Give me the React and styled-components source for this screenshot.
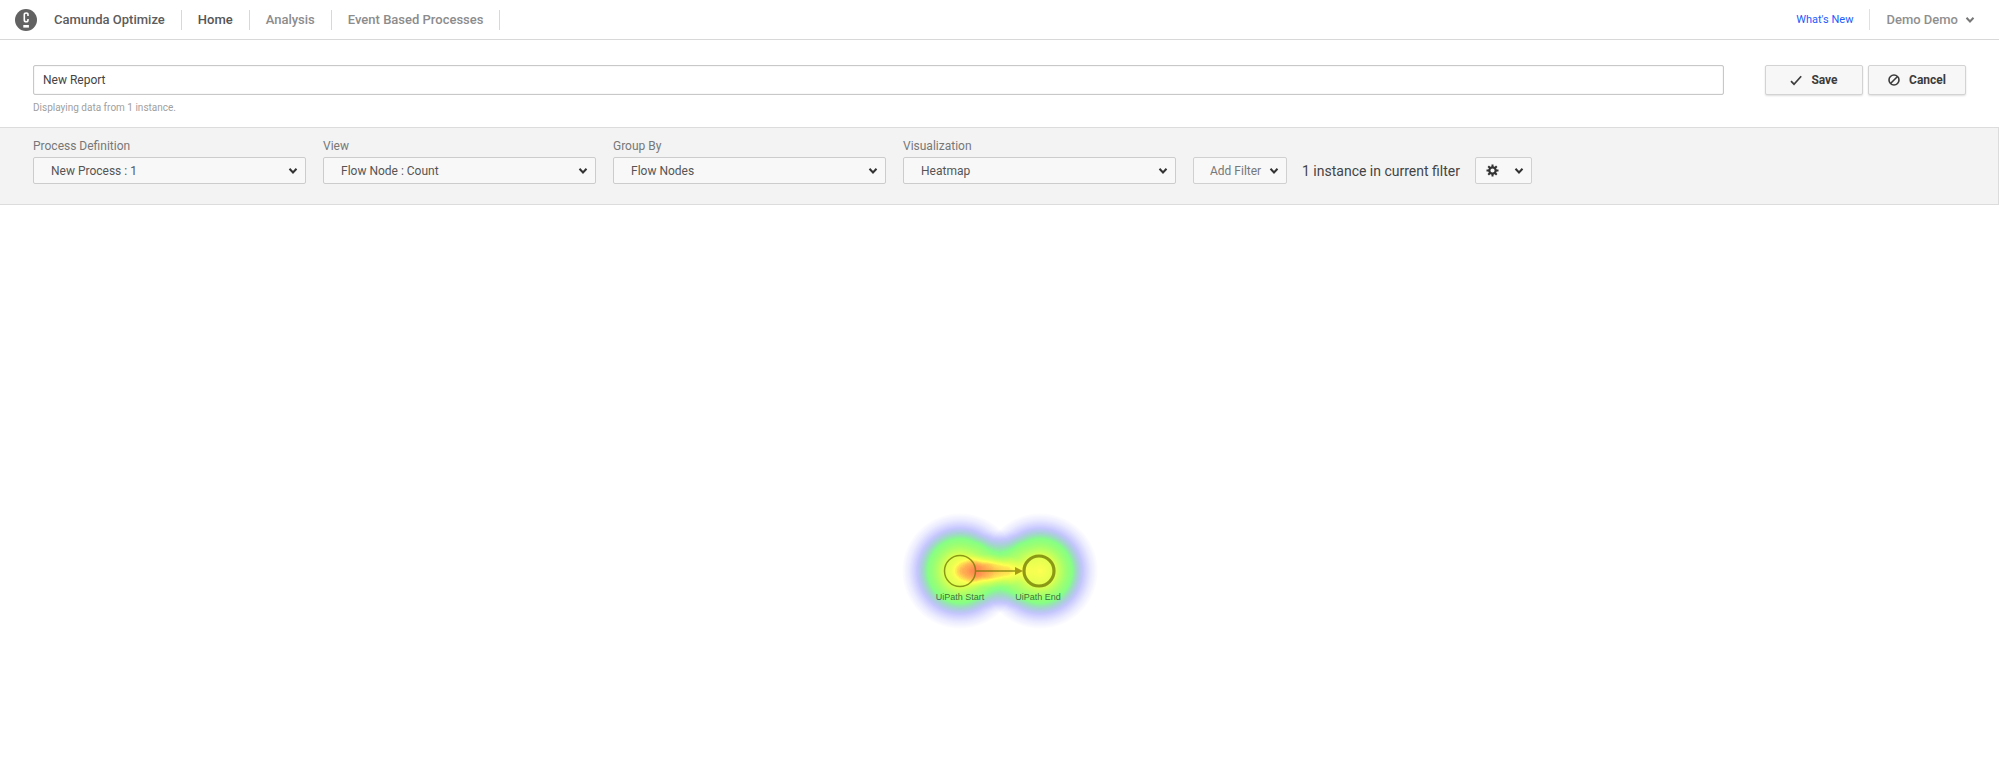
import React from 'react';
import styled, { createGlobalStyle } from 'styled-components';

const GlobalStyle = createGlobalStyle`
  *, *::before, *::after { box-sizing: border-box; }
  body { margin: 0; background: #fff; }
  body, button, input, select { font-family: Roboto, "Liberation Sans", sans-serif; }
`;

const Page = styled.div`
  display: flex;
  flex-direction: column;
  min-height: 100vh;
  color: #444;
`;

const Header = styled.header`
  display: flex;
  align-items: center;
  height: 40px;
  padding: 0 24px 0 15px;
  border-bottom: 1px solid #d8d8d8;
`;

const Brand = styled.a`
  display: flex;
  align-items: center;
  gap: 17px;
  padding-right: 16px;
  font-size: 13px;
  font-weight: 500;
  color: #5c5c5c;
  text-decoration: none;
`;

const Nav = styled.nav`
  display: flex;
  flex: 1;
  border-left: 1px solid #d8d8d8;
`;

const NavLink = styled.a`
  padding: 0 16px;
  border-right: 1px solid #d8d8d8;
  font-size: 13px;
  line-height: 20px;
  font-weight: 500;
  color: ${(p) => (p.$active ? '#555' : '#8c8c8c')};
  text-decoration: none;
`;

const NewsLink = styled.a`
  padding-right: 16px;
  font-size: 11px;
  line-height: 20px;
  color: #1a5cff;
  text-decoration: none;
`;

const UserButton = styled.button`
  display: flex;
  align-items: center;
  gap: 7px;
  padding: 0 0 0 16px;
  border: 0;
  border-left: 1px solid #e0e0e0;
  background: none;
  font-size: 13px;
  line-height: 21px;
  font-weight: 500;
  color: #8f8f8f;
`;

const ReportHeader = styled.section`
  display: flex;
  align-items: flex-start;
  gap: 41px;
  padding: 25px 33px 12px;
`;

const NameField = styled.div`
  flex: 1;
`;

const NameInput = styled.input`
  display: block;
  width: 100%;
  height: 30px;
  padding: 0 9px;
  border: 1px solid #c8c8c8;
  border-radius: 2px;
  box-shadow: inset 0 0 1px #bbb;
  font-size: 12px;
  color: #444;
`;

const Caption = styled.p`
  margin: 6px 0 0;
  font-size: 10px;
  line-height: 14px;
  color: #a0a0a0;
`;

const Actions = styled.div`
  display: flex;
  gap: 5px;
`;

const ActionButton = styled.button`
  display: flex;
  align-items: center;
  justify-content: center;
  gap: 9px;
  width: 98px;
  height: 30px;
  padding: 0;
  border: 1px solid #d3d3d3;
  border-radius: 2px;
  background: #f7f7f7;
  box-shadow: 0 1px 2px #0002;
  font-size: 12px;
  font-weight: 700;
  color: #3c3c3c;
`;

const ControlPanel = styled.section`
  display: flex;
  align-items: flex-start;
  gap: 17px;
  height: 78px;
  padding: 9px 33px 0;
  border: solid #dcdcdc;
  border-width: 1px 1px 1px 0;
  background: #f3f3f3;
`;

const Field = styled.div`
  display: flex;
  flex-direction: column;
  gap: 2px;
  flex: 0 1 273px;
  min-width: 0;
`;

const FieldLabel = styled.label`
  font-size: 12px;
  line-height: 18px;
  color: #777;
`;

const SelectBox = styled.div`
  display: grid;
  align-items: center;

  > * { grid-area: 1 / 1; }
  > svg { justify-self: end; margin-right: 8px; pointer-events: none; }
`;

const Select = styled.select`
  appearance: none;
  width: 100%;
  height: 27px;
  padding: 0 24px 0 17px;
  border: 1px solid #ccc;
  border-radius: 2px;
  background: #f8f8f8;
  font-size: 12px;
  color: #555;
`;

const FilterTools = styled.div`
  display: flex;
  align-items: center;
  gap: 15px;
  margin-top: 20px;
`;

const DropdownButton = styled.button`
  display: flex;
  align-items: center;
  justify-content: space-between;
  width: ${(p) => p.$width}px;
  height: 27px;
  padding: 0 7px 0 ${(p) => p.$indent}px;
  border: 1px solid #d0d0d0;
  border-radius: 2px;
  background: #f8f8f8;
  font-size: 12px;
  color: #777;
`;

const InstanceCount = styled.span`
  font-size: 14px;
  line-height: 20px;
  color: #444;
  white-space: nowrap;
`;

const Canvas = styled.main`
  display: flex;
  flex: 1;
  align-items: center;
  justify-content: center;
  padding-top: 168px;
`;

const Chevron = ({ color = '#333', weight = 2 }) => (
  <svg width="10" height="8" viewBox="0 0 10 8" fill="none" stroke={color} strokeWidth={weight} aria-hidden="true">
    <path d="M1.5 1.8 L5 5.5 L8.5 1.8" />
  </svg>
);

const Logo = () => (
  <svg width="22" height="22" viewBox="0 0 22 22" aria-hidden="true">
    <circle cx="11" cy="11" r="11" fill="#626262" />
    <path d="M13 7V5.5Q13 4 11.2 4Q9.3 4 9.3 5.5V11Q9.3 12.8 11.2 12.8Q13 12.8 13 11V10" fill="none" stroke="#fff" strokeWidth="1.6" />
    <rect x="8.3" y="16" width="5.6" height="2.6" fill="#fff" />
  </svg>
);

const CheckIcon = () => (
  <svg width="12" height="12" viewBox="0 0 12 12" fill="none" stroke="#3c3c3c" strokeWidth="1.7" aria-hidden="true">
    <path d="M1 7.2 L4 10.2 L11.2 2.2" />
  </svg>
);

const CancelIcon = () => (
  <svg width="12" height="12" viewBox="0 0 12 12" fill="none" stroke="#3c3c3c" strokeWidth="1.6" aria-hidden="true">
    <circle cx="6" cy="6" r="5" />
    <path d="M2.5 9.5 L9.5 2.5" />
  </svg>
);

const GearIcon = () => (
  <svg width="13" height="13" viewBox="0 0 13 13" fill="none" stroke="#333" aria-hidden="true">
    <circle cx="6.5" cy="6.5" r="3.2" strokeWidth="2.2" />
    {[0, 45, 90, 135].map((angle) => (
      <path key={angle} d="M6.5 0.5V3M6.5 10V12.5" strokeWidth="2" transform={`rotate(${angle} 6.5 6.5)`} />
    ))}
  </svg>
);

const HEAT_STOPS = [
  [0, [0, 0, 255]],
  [0.25, [0, 0, 255]],
  [0.55, [0, 255, 0]],
  [0.85, [255, 255, 0]],
  [1, [255, 0, 0]],
];

// Colour of a heat value from 0 to 1, laid over white with growing opacity.
function heatColor(value) {
  let i = 1;
  while (value > HEAT_STOPS[i][0]) i += 1;
  const [from, low] = HEAT_STOPS[i - 1];
  const [to, high] = HEAT_STOPS[i];
  const ratio = (value - from) / (to - from);
  const alpha = Math.min(value * 0.86, 0.68);
  return low.map((c, k) => (1 - alpha) + (alpha * (c + (high[k] - c) * ratio)) / 255);
}

const HEAT_TABLE = Array.from({ length: 41 }, (_, i) => heatColor(i / 40));
const channel = (k) => HEAT_TABLE.map((c) => c[k].toFixed(3)).join(' ');

const NODE_FALLOFF = [[0, 0.85], [0.28, 0.79], [0.55, 0.56], [0.76, 0.23], [0.88, 0.09], [1, 0]];
const FLOW_FALLOFF = [[0, 0.28], [0.4, 0.24], [0.7, 0.12], [1, 0]];
const PEAK_FALLOFF = [[0, 0.45], [0.4, 0.36], [0.7, 0.14], [1, 0]];

const Falloff = ({ id, stops }) => (
  <radialGradient id={id}>
    {stops.map(([offset, opacity]) => (
      <stop key={offset} offset={offset} stopColor="#fff" stopOpacity={opacity} />
    ))}
  </radialGradient>
);

const Heatmap = () => (
  <svg width="200" height="120" viewBox="0 0 200 120" role="img" aria-label="Flow node heatmap">
    <defs>
      <Falloff id="node" stops={NODE_FALLOFF} />
      <Falloff id="flow" stops={FLOW_FALLOFF} />
      <Falloff id="peak" stops={PEAK_FALLOFF} />
      <filter id="heat" filterUnits="userSpaceOnUse" x="0" y="0" width="200" height="120" colorInterpolationFilters="sRGB">
        <feColorMatrix values="0 0 0 1 0  0 0 0 1 0  0 0 0 1 0  0 0 0 0 1" />
        <feComponentTransfer>
          <feFuncR type="table" tableValues={channel(0)} />
          <feFuncG type="table" tableValues={channel(1)} />
          <feFuncB type="table" tableValues={channel(2)} />
        </feComponentTransfer>
      </filter>
    </defs>
    <g filter="url(#heat)">
      <circle cx="60" cy="60" r="58" fill="url(#node)" />
      <circle cx="140" cy="60" r="58" fill="url(#node)" />
      <ellipse cx="100" cy="60" rx="36" ry="42" fill="url(#flow)" />
      <ellipse cx="94" cy="60" rx="40" ry="17" fill="url(#peak)" />
      <ellipse cx="90" cy="60" rx="38" ry="17" fill="url(#peak)" />
      <ellipse cx="72" cy="60" rx="22" ry="18" fill="url(#peak)" />
    </g>
    <g fill="none" stroke="#6e7800" opacity="0.75">
      <circle cx="60" cy="60" r="15.5" strokeWidth="1.5" />
      <circle cx="139" cy="60" r="15" strokeWidth="3.2" />
      <path d="M76 60H117" strokeWidth="1.5" />
      <path d="M115 56L123 60L115 64Z" fill="#8a7a00" stroke="none" />
    </g>
    <g fill="#000" fillOpacity="0.6" fontFamily="Liberation Sans, sans-serif" fontSize="9" textAnchor="middle">
      <text x="60" y="89">UiPath Start</text>
      <text x="138" y="89">UiPath End</text>
    </g>
  </svg>
);

const FIELDS = [
  { id: 'definition', label: 'Process Definition', value: 'New Process : 1' },
  { id: 'view', label: 'View', value: 'Flow Node : Count' },
  { id: 'group', label: 'Group By', value: 'Flow Nodes' },
  { id: 'visualization', label: 'Visualization', value: 'Heatmap' },
];

export default function App() {
  return (
    <Page>
      <GlobalStyle />
      <Header>
        <Brand href="#"><Logo />Camunda Optimize</Brand>
        <Nav>
          <NavLink href="#" $active>Home</NavLink>
          <NavLink href="#">Analysis</NavLink>
          <NavLink href="#">Event Based Processes</NavLink>
        </Nav>
        <NewsLink href="#">What's New</NewsLink>
        <UserButton type="button">Demo Demo<Chevron color="#777" /></UserButton>
      </Header>
      <ReportHeader>
        <NameField>
          <NameInput aria-label="Report name" defaultValue="New Report" />
          <Caption>Displaying data from 1 instance.</Caption>
        </NameField>
        <Actions>
          <ActionButton type="button"><CheckIcon />Save</ActionButton>
          <ActionButton type="button"><CancelIcon />Cancel</ActionButton>
        </Actions>
      </ReportHeader>
      <ControlPanel>
        {FIELDS.map(({ id, label, value }) => (
          <Field key={id}>
            <FieldLabel htmlFor={id}>{label}</FieldLabel>
            <SelectBox>
              <Select id={id} defaultValue={value}><option>{value}</option></Select>
              <Chevron />
            </SelectBox>
          </Field>
        ))}
        <FilterTools>
          <DropdownButton type="button" $width={94} $indent={16}>Add Filter<Chevron /></DropdownButton>
          <InstanceCount>1 instance in current filter</InstanceCount>
          <DropdownButton type="button" $width={57} $indent={10} aria-label="Report settings"><GearIcon /><Chevron /></DropdownButton>
        </FilterTools>
      </ControlPanel>
      <Canvas><Heatmap /></Canvas>
    </Page>
  );
}
